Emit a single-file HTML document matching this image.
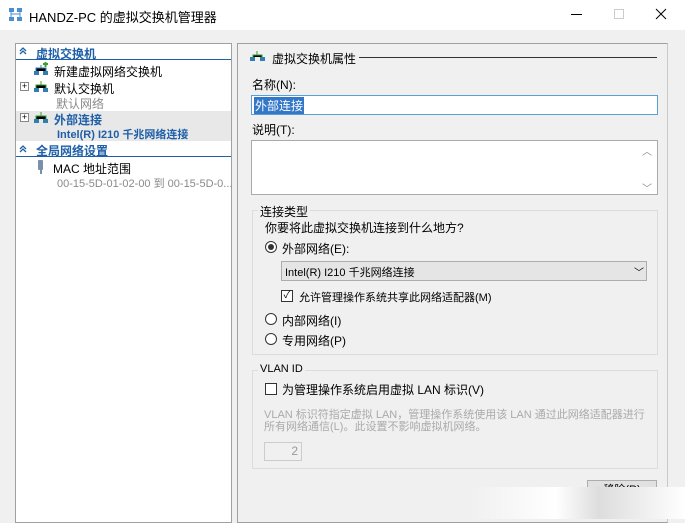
<!DOCTYPE html>
<html><head><meta charset="utf-8"><style>
*{margin:0;padding:0;box-sizing:border-box}
body{width:685px;height:519px;overflow:hidden;background:#f0f0f0;font-family:"Liberation Sans","Noto Sans CJK SC",sans-serif;font-size:12px;color:#000;position:relative}
.a{position:absolute;white-space:nowrap}
.hd{color:#1e5fa8;font-weight:bold}
.gr{color:#8a8a8a}
</style></head><body>
<div class="a" style="left:0;top:0;width:685px;height:30px;background:#fff"></div>
<svg class="a" style="left:8px;top:7px" width="16" height="16"><rect x="1" y="1" width="5" height="4" fill="#4a8fd0"/><rect x="9" y="1" width="5" height="4" fill="#4a8fd0"/><rect x="1" y="10" width="5" height="4" fill="#4a8fd0"/><rect x="9" y="10" width="5" height="4" fill="#4a8fd0"/><path d="M3 5v5M12 5v5M3 7h9" stroke="#4a8fd0"/></svg>
<div class="a" style="left:29px;top:7px;font-size:13px">HANDZ-PC 的虚拟交换机管理器</div>
<div class="a" style="left:571px;top:14px;width:11px;height:1px;background:#000"></div>
<div class="a" style="left:614px;top:9px;width:10px;height:10px;border:1px solid #ccc"></div>
<svg class="a" style="left:655px;top:8px" width="12" height="12"><path d="M1 1L11 11M11 1L1 11" stroke="#000" stroke-width="1"/></svg>

<div class="a" style="left:15px;top:43px;width:217px;height:480px;background:#fff;border:1px solid #a0a0a0"></div>
<div class="a" style="left:16px;top:44px;width:215px;height:16px;border-bottom:1px solid #1e5fa8"></div>
<svg class="a" style="left:19px;top:47px" width="9" height="8"><path d="M1 4l3-3 3 3M1 7l3-3 3 3" stroke="#1e5fa8" fill="none" stroke-width="1.3"/></svg>
<div class="a hd" style="left:36px;top:45px">虚拟交换机</div>
<svg class="a" style="left:33px;top:62px" width="16" height="14"><rect x="1" y="9" width="5" height="4" fill="#2f7fb0"/><rect x="10" y="9" width="5" height="4" fill="#2f7fb0"/><path d="M3 9V6h10v3M8 6V3" stroke="#2f7fb0"/><path d="M10 2h5M12.5 0v5" stroke="#3aa030" stroke-width="2"/></svg>
<div class="a" style="left:54px;top:63px">新建虚拟网络交换机</div>
<div class="a" style="left:20px;top:82px;width:9px;height:9px;border:1px solid #888;font-size:9px;line-height:7px;text-align:center">+</div>
<svg class="a" style="left:33px;top:79px" width="16" height="14"><rect x="1" y="9" width="5" height="4" fill="#2f7fb0"/><rect x="10" y="9" width="5" height="4" fill="#2f7fb0"/><path d="M3 9V6h10v3M8 6V2" stroke="#3aa030"/></svg>
<div class="a" style="left:54px;top:80px">默认交换机</div>
<div class="a gr" style="left:56px;top:95px">默认网络</div>
<div class="a" style="left:16px;top:111px;width:215px;height:30px;background:#e8e8e8"></div>
<div class="a" style="left:20px;top:113px;width:9px;height:9px;border:1px solid #888;font-size:9px;line-height:7px;text-align:center;background:#fff">+</div>
<svg class="a" style="left:33px;top:110px" width="16" height="14"><rect x="1" y="9" width="5" height="4" fill="#2f7fb0"/><rect x="10" y="9" width="5" height="4" fill="#2f7fb0"/><path d="M3 9V6h10v3M8 6V2" stroke="#3aa030"/></svg>
<div class="a hd" style="left:54px;top:111px">外部连接</div>
<div class="a hd" style="left:57px;top:126px;font-size:11px">Intel(R) I210 千兆网络连接</div>
<div class="a" style="left:16px;top:142px;width:215px;height:15px;border-bottom:1px solid #1e5fa8"></div>
<svg class="a" style="left:19px;top:145px" width="9" height="8"><path d="M1 4l3-3 3 3M1 7l3-3 3 3" stroke="#1e5fa8" fill="none" stroke-width="1.3"/></svg>
<div class="a hd" style="left:36px;top:142px">全局网络设置</div>
<div class="a" style="left:38px;top:160px;width:5px;height:10px;background:#7a8fa8;border-radius:1px"></div>
<div class="a" style="left:40px;top:170px;width:2px;height:4px;background:#7a8fa8"></div>
<div class="a" style="left:53px;top:160px">MAC 地址范围</div>
<div class="a gr" style="left:57px;top:175px;font-size:11px">00-15-5D-01-02-00 到 00-15-5D-0...</div>

<div class="a" style="left:237px;top:43px;width:431px;height:480px;border:1px solid #a0a0a0;border-right-color:#c8c8c8"></div>
<svg class="a" style="left:250px;top:50px" width="16" height="12"><rect x="0" y="7" width="5" height="4" fill="#2f7fb0"/><rect x="10" y="7" width="5" height="4" fill="#2f7fb0"/><path d="M3 7V5h9v2M7 5V1" stroke="#3aa030"/></svg>
<div class="a" style="left:272px;top:50px">虚拟交换机属性</div>
<div class="a" style="left:359px;top:57px;width:298px;height:1px;background:#333"></div>
<div class="a" style="left:252px;top:76px">名称(N):</div>
<div class="a" style="left:251px;top:95px;width:407px;height:20px;background:#fff;border:1px solid #5a9fd4"></div>
<div class="a" style="left:254px;top:97px;background:#3377c8;color:#fff;padding:0 1px">外部连接</div>
<div class="a" style="left:252px;top:121px">说明(T):</div>
<div class="a" style="left:251px;top:140px;width:407px;height:55px;background:#fff;border:1px solid #aaa"></div>
<div class="a gr" style="left:642px;top:143px;font-size:10px">︿</div>
<div class="a gr" style="left:642px;top:180px;font-size:10px">﹀</div>

<div class="a" style="left:252px;top:210px;width:406px;height:145px;border:1px solid #dcdcdc"></div>
<div class="a" style="left:258px;top:203px;background:#f0f0f0;padding:0 2px">连接类型</div>
<div class="a" style="left:265px;top:219px">你要将此虚拟交换机连接到什么地方?</div>
<div class="a" style="left:265px;top:241px;width:12px;height:12px;border:1px solid #333;border-radius:50%;background:#fff"></div>
<div class="a" style="left:268px;top:244px;width:6px;height:6px;border-radius:50%;background:#333"></div>
<div class="a" style="left:282px;top:240px">外部网络(E):</div>
<div class="a" style="left:281px;top:261px;width:366px;height:20px;background:#e5e5e5;border:1px solid #adadad"></div>
<div class="a" style="left:285px;top:264px;font-size:11px">Intel(R) I210 千兆网络连接</div>
<div class="a" style="left:634px;top:264px;font-size:10px">﹀</div>
<div class="a" style="left:281px;top:290px;width:12px;height:12px;border:1px solid #333;background:#fff;font-size:10px;line-height:10px;text-align:center">✓</div>
<div class="a" style="left:299px;top:289px;font-size:11px">允许管理操作系统共享此网络适配器(M)</div>
<div class="a" style="left:265px;top:313px;width:12px;height:12px;border:1px solid #333;border-radius:50%;background:#fff"></div>
<div class="a" style="left:282px;top:312px">内部网络(I)</div>
<div class="a" style="left:265px;top:333px;width:12px;height:12px;border:1px solid #333;border-radius:50%;background:#fff"></div>
<div class="a" style="left:282px;top:332px">专用网络(P)</div>

<div class="a" style="left:252px;top:370px;width:406px;height:99px;border:1px solid #dcdcdc"></div>
<div class="a" style="left:258px;top:363px;background:#f0f0f0;padding:0 2px;font-size:11px">VLAN ID</div>
<div class="a" style="left:265px;top:383px;width:12px;height:12px;border:1px solid #333;background:#fff"></div>
<div class="a" style="left:282px;top:381px">为管理操作系统启用虚拟 LAN 标识(V)</div>
<div class="a" style="left:264px;top:409px;color:#aaa;font-size:11px;line-height:12px;white-space:normal;width:390px">VLAN 标识符指定虚拟 LAN，管理操作系统使用该 LAN 通过此网络适配器进行所有网络通信(L)。此设置不影响虚拟机网络。</div>
<div class="a" style="left:264px;top:442px;width:38px;height:19px;border:1px solid #ccc;color:#999;text-align:right;padding-right:3px;line-height:17px">2</div>

<div class="a" style="left:587px;top:480px;width:70px;height:30px;background:#e1e1e1;border:1px solid #adadad;text-align:center;line-height:18px;font-size:11px">移除(R)</div>
<div class="a" style="left:470px;top:487px;width:215px;height:32px;background:linear-gradient(90deg,rgba(255,255,255,0),#fff 40%,#ddd 60%,#fff)"></div>
</body></html>
